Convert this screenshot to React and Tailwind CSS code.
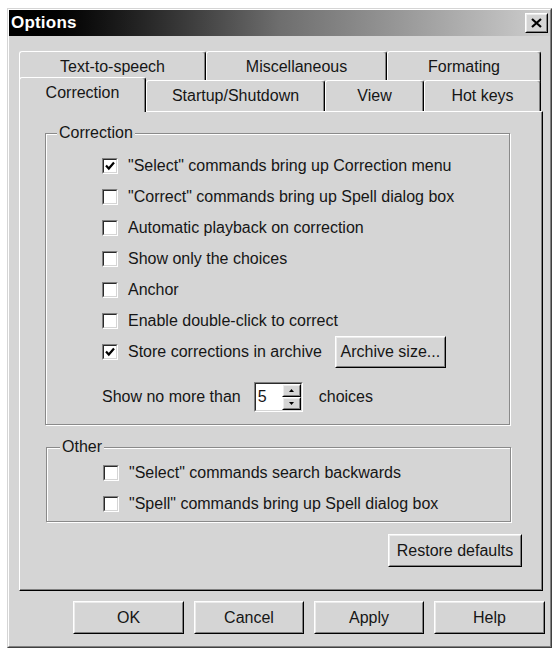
import React from "react";

const FACE = "bg-[#d5d5d5]";

// Classic raised 3D button frame
function Raised({ className = "", children, innerClass = "" }) {
  return (
    <div className={`border border-t-white border-l-white border-r-black border-b-black ${FACE} ${className}`}>
      <div className={`w-full h-full border border-t-[#ececec] border-l-[#ececec] border-r-[#808080] border-b-[#808080] flex items-center justify-center ${innerClass}`}>
        {children}
      </div>
    </div>
  );
}

function CheckBox({ checked }) {
  return (
    <div className="w-4 h-4 shrink-0 border border-t-[#808080] border-l-[#808080] border-r-white border-b-white">
      <div className="w-full h-full border border-t-[#2a2a2a] border-l-[#2a2a2a] border-r-[#d5d5d5] border-b-[#d5d5d5] bg-white flex items-center justify-center">
        {checked && (
          <svg width="10" height="10" viewBox="0 0 10 10">
            <polyline points="1,4.5 3.8,7.5 9,1.5" fill="none" stroke="#000" strokeWidth="2.2" />
          </svg>
        )}
      </div>
    </div>
  );
}

function Row({ checked, children, extra }) {
  return (
    <div className="h-[31px] flex items-center">
      <CheckBox checked={checked} />
      <span className="ml-[10px] whitespace-nowrap">{children}</span>
      {extra}
    </div>
  );
}

function Group({ label, labelLeft, className = "", children }) {
  return (
    <div className={`relative border border-[#8a8a8a] shadow-[inset_1px_1px_0_#fff,1px_1px_0_#fff] ${className}`}>
      <span className={`absolute top-[-10px] ${labelLeft} px-[2px] ${FACE} leading-[18px]`}>{label}</span>
      {children}
    </div>
  );
}

function Tab({ className = "", children }) {
  return (
    <div
      className={`flex items-center justify-center rounded-t-[3px] border-t border-l border-r border-t-white border-l-white border-r-black shadow-[inset_-1px_0_0_#808080] ${FACE} ${className}`}
    >
      <span className="whitespace-nowrap">{children}</span>
    </div>
  );
}

export default function App() {
  return (
    <div className="w-[557px] h-[649px] bg-white pt-[8px] pl-[7px] font-['Liberation_Sans',Arial,sans-serif] text-[16px] leading-[18px] text-[#161616]">
      {/* window frame */}
      <div className="w-[545px] h-[640px] border border-t-[#d5d5d5] border-l-[#d5d5d5] border-r-[#404040] border-b-[#404040]">
        <div className={`w-full h-full border border-t-white border-l-white border-r-[#808080] border-b-[#808080] ${FACE} flex flex-col`}>
          {/* title bar */}
          <div className="h-[26px] flex items-center bg-gradient-to-r from-black via-[#6e6e6e] to-[#cfcfcf]">
            <span className="pl-[2px] font-bold text-[17px] text-white tracking-[0.2px]">Options</span>
            <Raised className="ml-auto mr-[2px] w-[23px] h-[20px]">
              <svg width="11" height="10" viewBox="0 0 11 10">
                <path d="M1 1 L10 9 M10 1 L1 9" stroke="#000" strokeWidth="2.2" />
              </svg>
            </Raised>
          </div>

          {/* tab strip + page */}
          <div className="mt-[15px] ml-[10px] w-[524px] flex flex-col">
            <div className="h-[29px] flex">
              <Tab className="w-[187px] h-[31px]">Text-to-speech</Tab>
              <Tab className="w-[181px] h-[31px]">Miscellaneous</Tab>
              <Tab className="w-[154px] h-[31px]">Formating</Tab>
            </div>
            <div className="h-[31px] flex items-end relative z-10">
              <Tab className="w-[127px] h-[35px] translate-y-[1px] relative z-20 pb-[4px]">Correction</Tab>
              <Tab className="w-[179px] h-[31px]">Startup/Shutdown</Tab>
              <Tab className="w-[99px] h-[31px]">View</Tab>
              <Tab className="w-[117px] h-[31px]">Hot keys</Tab>
            </div>

            {/* page */}
            <div className={`h-[480px] border border-t-white border-l-white border-r-black border-b-black shadow-[inset_-1px_-1px_0_#808080] ${FACE} flex flex-col`}>
              <Group label="Correction" labelLeft="left-[11px]" className="mt-[21px] ml-[25px] w-[465px] h-[292px] pt-[16px] pl-[56px] pr-[4px]">
                <Row checked>"Select" commands bring up Correction menu</Row>
                <Row>"Correct" commands bring up Spell dialog box</Row>
                <Row>Automatic playback on correction</Row>
                <Row>Show only the choices</Row>
                <Row>Anchor</Row>
                <Row>Enable double-click to correct</Row>
                <Row
                  checked
                  extra={
                    <Raised className="ml-[13px] w-[111px] h-[32px] shrink-0">
                      <span className="whitespace-nowrap">Archive size...</span>
                    </Raised>
                  }
                >
                  Store corrections in archive
                </Row>
                <div className="mt-[15px] h-[30px] flex items-center">
                  <span className="whitespace-nowrap">Show no more than</span>
                  <div className="ml-[13px] w-[49px] h-[30px] border border-t-[#808080] border-l-[#808080] border-r-white border-b-white">
                    <div className="w-full h-full border border-t-[#2a2a2a] border-l-[#2a2a2a] border-r-[#d5d5d5] border-b-[#d5d5d5] bg-white flex">
                      <span className="flex-1 pl-[2px] self-center">5</span>
                      <div className="w-[19px] flex flex-col">
                        <Raised className="flex-1">
                          <svg width="5" height="3" viewBox="0 0 5 3"><path d="M0 3 L2.5 0 L5 3 Z" fill="#000" /></svg>
                        </Raised>
                        <Raised className="flex-1">
                          <svg width="5" height="3" viewBox="0 0 5 3"><path d="M0 0 L5 0 L2.5 3 Z" fill="#000" /></svg>
                        </Raised>
                      </div>
                    </div>
                  </div>
                  <span className="ml-[16px]">choices</span>
                </div>
              </Group>

              <Group label="Other" labelLeft="left-[13px]" className="mt-[22px] ml-[26px] w-[465px] h-[75px] pt-[9px] pl-[56px]">
                <Row>"Select" commands search backwards</Row>
                <Row>"Spell" commands bring up Spell dialog box</Row>
              </Group>

              <Raised className="mt-[12px] self-end mr-[20px] w-[134px] h-[33px]">
                <span className="whitespace-nowrap">Restore defaults</span>
              </Raised>
            </div>
          </div>

          {/* dialog buttons */}
          <div className="mt-[10px] mr-[5px] flex justify-end gap-[10px]">
            <Raised className="w-[111px] h-[33px]">OK</Raised>
            <Raised className="w-[110px] h-[33px]">Cancel</Raised>
            <Raised className="w-[110px] h-[33px]">Apply</Raised>
            <Raised className="w-[111px] h-[33px]">Help</Raised>
          </div>
        </div>
      </div>
    </div>
  );
}
